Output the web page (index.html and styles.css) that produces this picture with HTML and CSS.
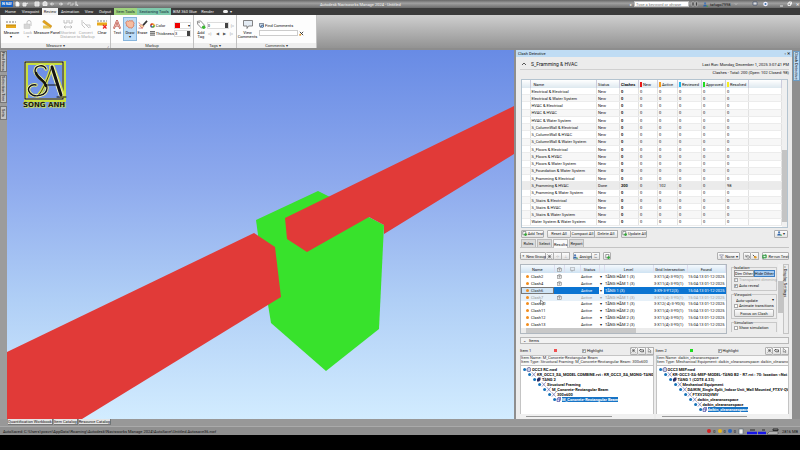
FILE: index.html
```html
<!DOCTYPE html>
<html lang="en">
<head>
<meta charset="utf-8">
<title>Autodesk Navisworks Manage 2024 - Untitled</title>
<link rel="stylesheet" href="styles.css">
</head>
<body>
<svg class="defs" aria-hidden="true">
  <symbol id="ruler" viewBox="0 0 10 9"><path d="M0 2h10" stroke="#555" stroke-width=".8" stroke-dasharray="2 1"/><rect y="4.5" width="10" height="3.5" fill="#e8a91c"/><path d="M1 4.500v1.500M3 4.500v1.500M5 4.500v1.500M7 4.500v1.500M9 4.500v1.500" stroke="#7d5a10" stroke-width=".5"/></symbol>
  <symbol id="lock" viewBox="0 0 10 9"><path d="M4 4V2.500a2 2 0 0 1 4 0V6" fill="none" stroke="#c4c4c4"/><rect x="1" y="4" width="6" height="4.500" fill="#d6d6d6" stroke="#bbb" stroke-width=".4"/></symbol>
  <symbol id="mpanel" viewBox="0 0 10 9"><path d="M2 0L10 6 8.500 8 .5 2z" fill="#e2a21a" stroke="#a87410" stroke-width=".3"/><path d="M1 5.500h4l4 3H1z" fill="#e6c356"/></symbol>
  <symbol id="shortest" viewBox="0 0 10 9"><path d="M1 0v3h3V0M6 0v3h3V0M1 7h8M2.500 5.500L1 7l1.500 1.500M7.500 5.500L9 7 7.500 8.500" fill="none" stroke="#b9b9b9" stroke-width=".9"/></symbol>
  <symbol id="convert" viewBox="0 0 10 9"><path d="M1 0v5l3 3M2 2l6 6M5 5h4v3" fill="none" stroke="#c0c0c0" stroke-width=".9"/></symbol>
  <symbol id="clear" viewBox="0 0 10 9"><path d="M0 1h10" stroke="#666" stroke-width=".8" stroke-dasharray="2 1"/><rect y="2.500" width="10" height="3" fill="#e8a91c"/><path d="M6 5l3.500 3.500M9.500 5L6 8.500" stroke="#e22" stroke-width="1.300"/></symbol>
  <symbol id="text" viewBox="0 0 10 10"><path d="M1.500 9.500L5 .8l3.500 8.700M2.900 6.200h4.200" fill="none" stroke="#b4453b" stroke-width="2"/><path d="M1.500 9.500L5 .8l3.500 8.700M2.900 6.200h4.200" fill="none" stroke="#fbd8cf" stroke-width=".8"/></symbol>
  <symbol id="cloud" viewBox="0 0 10 10"><path d="M1 2q1-2 2.500-.5Q5-.5 6 1.200 8-.3 8.500 2 10.500 3.500 9 5q1.200 2-.8 2.500Q7.500 10 5.500 8.700 3 9.500 2.800 7.200.2 7 1 4.800-.5 3 1 2z" fill="#f6bca0" stroke="#cf6b4f" stroke-width=".8"/></symbol>
  <symbol id="erase" viewBox="0 0 10 10"><path d="M9.500 1L5 6" stroke="#333" stroke-width="1.800"/><path d="M1 6l2-1 3 2-2 2z" fill="#f5d9a0" stroke="#b33" stroke-width=".5"/><path d="M0 3l2 1M0 9h5" stroke="#c44" stroke-width=".7"/></symbol>
  <symbol id="wheel" viewBox="0 0 6 6"><circle cx="3" cy="3" r="2.800" fill="#f39b1c"/><path d="M3 3V.2A2.800 2.800 0 0 0 .2 3z" fill="#d02a2a"/><path d="M3 3H.2A2.800 2.800 0 0 0 3 5.800z" fill="#2a62c8"/><path d="M3 3v2.800A2.800 2.800 0 0 0 5.800 3z" fill="#3aaa44"/><circle cx="3" cy="3" r="1" fill="#fff"/></symbol>
  <symbol id="thick" viewBox="0 0 6 6"><path d="M0 .8h6M0 2.700h6M0 4.900h6" stroke="#444" stroke-width="1.100"/></symbol>
  <symbol id="tag" viewBox="0 0 10 10"><path d="M1 1.500L4.500 1 9 6 5.500 9 1.200 4.500z" fill="#fff" stroke="#666" stroke-width=".8"/><circle cx="2.800" cy="2.800" r=".7" fill="#555"/><circle cx="8" cy="8" r="2" fill="#3cb832"/></symbol>
  <symbol id="bubble" viewBox="0 0 10 9"><path d="M.5.5h9v5.500H5.500L4 8.500V6H.5z" fill="#e4ecf4" stroke="#777" stroke-width=".9"/></symbol>
  <symbol id="find" viewBox="0 0 6 6"><path d="M.5.500h5v3.500H3L2 5.500V4H.5z" fill="#cfdcec" stroke="#456" stroke-width=".8"/><circle cx="4" cy="4" r="1.400" fill="#9cf" stroke="#235" stroke-width=".7"/></symbol>
  <symbol id="bino" viewBox="0 0 6 6"><path d="M1 1l4 4M5 1L1 5" stroke="#333" stroke-width="1.100"/><circle cx="1.500" cy="4.500" r="1.200" fill="#e49a28"/></symbol>
  <symbol id="docadd" viewBox="0 0 6 6"><path d="M1 .5h3.500v4H1z" fill="#fff" stroke="#555" stroke-width=".7"/><circle cx="4.300" cy="4.300" r="1.600" fill="#2ea836"/></symbol>
  <symbol id="cam" viewBox="0 0 6 6"><rect x=".5" y="1.500" width="5" height="3.800" fill="#eee" stroke="#777" stroke-width=".6"/><path d="M2 1.500V.7h2v.8" stroke="#777" stroke-width=".6" fill="none"/><circle cx="3" cy="3.400" r="1" fill="#999"/></symbol>
  <symbol id="person" viewBox="0 0 6 6"><circle cx="2.500" cy="1.500" r="1.300" fill="#4b78b5"/><path d="M.3 5.500q0-2.500 2.200-2.500t2.200 2.500z" fill="#2f66ab"/><circle cx="5" cy="5" r=".8" fill="#3a3"/></symbol>
  <symbol id="cyc" viewBox="0 0 6 6"><path d="M1 4V1.500h3.500M5 2v2.500H1.500" fill="none" stroke="#2a9a3a" stroke-width="1.200"/><path d="M4 0l2 1.500L4 3zM2 3L0 4.500 2 6z" fill="#2a9a3a"/></symbol>
  <symbol id="filter" viewBox="0 0 6 6"><path d="M.5 1h5L3.500 3v2.500L2.500 4.500V3z" fill="#eef" stroke="#667" stroke-width=".6"/></symbol>
  <symbol id="undo" viewBox="0 0 6 6"><path d="M1 1v2.500h2.500M1.200 3.200Q3 .5 5 2.500T3 5.500" fill="none" stroke="#666" stroke-width=".8"/></symbol>
  <symbol id="eyes" viewBox="0 0 6 6"><path d="M1 1l3 3" stroke="#555" stroke-width="1.200"/><circle cx="4" cy="4" r="1.500" fill="#e49a28"/></symbol>
  <symbol id="hand" viewBox="0 0 6 6"><path d="M.5 3L2 1.300v1h3.500v2.200H2.500z" fill="#fff" stroke="#222" stroke-width=".8"/></symbol>
  <symbol id="arrow" viewBox="0 0 6 6"><path d="M1.500.5v4.500l1.200-1 1 1.700.7-.4-.9-1.700h1.500z" fill="#fff" stroke="#333" stroke-width=".5"/></symbol>
  <symbol id="grp" viewBox="0 0 6 6"><path d="M.5.500l5 5M5.500.500l-5 5M1 3h4M3 1v4" stroke="#555" stroke-width=".6"/></symbol>
  <symbol id="node" viewBox="0 0 8 5"><circle cx="1.600" cy="2.500" r="1.500" fill="#1572b8"/><path d="M4 .5l3.500 4M7.500.5L4 4.500" stroke="#3a3a90" stroke-width=".8" stroke-dasharray="1 .4"/></symbol>
  <symbol id="file" viewBox="0 0 8 5"><circle cx="1.600" cy="2.500" r="1.500" fill="#1572b8"/><path d="M4 1.500L6 .3l1.700 1V4L6 4.800 4 4z" fill="#c9d0e8" stroke="#3a3a80" stroke-width=".6"/></symbol>
  <symbol id="level" viewBox="0 0 8 5"><circle cx="1.600" cy="2.500" r="1.500" fill="#1572b8"/><path d="M4 2l1.500-1.500h2V3L6 4.500H4z" fill="#2b2b60"/></symbol>
  <symbol id="geo" viewBox="0 0 8 5"><circle cx="1.600" cy="2.500" r="1.500" fill="#1572b8"/><path d="M4 2h2.500v2.500H4zM4 2l1-1.500h2.500L6.500 2M7.500.5V3l-1 1.500" fill="#dfe0f4" stroke="#3c3c9c" stroke-width=".6"/></symbol>
</svg>

<header class="titlebar">
  <div class="quick">
    <span class="app">N<small>NAV</small></span>
    <svg viewBox="0 0 72 8" class="qicons"><g fill="none" stroke="#eee" stroke-width=".9"><path d="M3 2h2l1 1v3H3z" fill="#fff"/><path d="M10 3h3v3h-3zM13 4l2-1" fill="#ddd"/><path d="M22 2h4v4h-4zM22 4h4" fill="#ccc"/><path d="M30 2.500l2-1 2 1v3H30z" fill="#ddd"/><path d="M38 4h3M39 2.500L37.500 4 39 5.500M46 4h3M48 2.500L49.500 4 48 5.500"/><path d="M55 5V3h3M60 3v2h-3" stroke="#ccc"/><path d="M63 1.500v4l1-1 1 1.500"/></g></svg>
  </div>
  <h1>Autodesk Navisworks Manage 2024 - Untitled</h1>
  <div class="account">
    <span>▸</span><input class="search" type="text" aria-label="Search" placeholder="Type a keyword or phrase">
    <svg viewBox="0 0 10 6" class="i10"><path d="M1 1h2v4H1zM4.500 1h2v4h-2z" fill="#444" stroke="#ccc" stroke-width=".5"/></svg>
    <svg class="i5"><use href="#person"/></svg><span class="user">tafugo7998</span>
    <svg viewBox="0 0 60 8" class="winicons"><path d="M3 3.500l1 1 1-1" stroke="#ddd" stroke-width=".6" fill="none"/><path d="M21 2h4v3h-4z" fill="#ddd" stroke="#346" stroke-width=".6"/><circle cx="33.500" cy="4" r="2.300" fill="#eef"/><circle cx="33.500" cy="4" r="1" fill="#47a"/><path d="M48 6h3M56 3h2.500v2.500H56zM57 3V2h2.500v2.500" stroke="#fff" stroke-width=".8" fill="none"/></svg>
    <button class="close" aria-label="Close">✕</button>
  </div>
</header>

<nav class="menu">
  <a href="#">Home</a><a href="#">Viewpoint</a><a href="#" class="on">Review</a><a href="#">Animation</a><a href="#">View</a><a href="#">Output</a><a href="#" class="item">Item Tools</a><a href="#" class="section">Sectioning Tools</a><a href="#">BIM 360 Glue</a><a href="#">Render</a><a href="#"><i class="pill"></i>▾</a>
</nav>

<section class="ribbon">
  <div class="group g-measure">
    <div class="tools">
      <button class="tool w19"><svg><use href="#ruler"/></svg>Measure<b>▾</b></button>
      <button class="tool w14 off"><svg><use href="#lock"/></svg>Lock<b>▾</b></button>
      <button class="tool w25"><svg><use href="#mpanel"/></svg>Measure Panel</button>
      <button class="tool w17 off"><svg><use href="#shortest"/></svg>Shortest<br>Distance</button>
      <button class="tool w19 off"><svg><use href="#convert"/></svg>Convert<br>to Markup</button>
      <button class="tool w14"><svg><use href="#clear"/></svg>Clear</button>
    </div>
    <h2>Measure ▾<em>⌟</em></h2>
  </div>
  <div class="group g-markup">
    <div class="tools">
      <button class="tool w11"><svg><use href="#text"/></svg>Text</button>
      <button class="tool w16 sel"><svg><use href="#cloud"/></svg>Draw<b>▾</b></button>
      <button class="tool w11"><svg><use href="#erase"/></svg>Erase</button>
      <div class="fields">
        <label for="color"><svg class="i5"><use href="#wheel"/></svg>Color</label><span class="swatch"><select id="color"><option></option></select></span>
        <label for="thick"><svg class="i5"><use href="#thick"/></svg>Thickness</label><span class="spin"><input id="thick" type="text" value="3"></span>
      </div>
    </div>
    <h2>Markup</h2>
  </div>
  <div class="group g-tags">
    <div class="tools">
      <button class="tool w11"><svg><use href="#tag"/></svg>Add<br>Tag</button>
      <div class="tagbox"><div class="row"><span class="spin"><input type="text" aria-label="Tag" value="0"></span><button>▷</button></div>
      <div class="row nav"><button>◁</button><button>◀</button><button>▶</button><button>▷</button></div></div>
    </div>
    <h2>Tags ▾</h2>
  </div>
  <div class="group g-comments">
    <div class="tools">
      <button class="tool w19"><svg><use href="#bubble"/></svg>View<br>Comments</button>
      <div class="findbox"><label for="fc"><svg class="i5"><use href="#find"/></svg>Find Comments</label><div class="row"><input id="fc" type="text"><svg class="i5"><use href="#bino"/></svg></div></div>
    </div>
    <h2>Comments ▾</h2>
  </div>
</section>

<main class="work">
  <aside class="rail left"><button class="t1">Find Items</button><button class="t2">Selection Tree</button><button class="t3">Sets</button></aside>

  <section class="scene">
    <svg class="model" viewBox="7 50 507 369" preserveAspectRatio="none">
      <polygon fill="#38e22c" points="256,220 318,191 332,198 384,225 379,329 326,371 271,323 264,280"/>
      <polygon fill="#e13a38" points="7,352 254,233 275,247 281,297 82,419 7,419"/>
      <polygon fill="#e13a38" points="285,218 514,106 514,154 384,234 384,225 369,217 307,252 287,239"/>
    </svg>
    <figure class="logo">
      <svg viewBox="0 0 46 42" role="img" aria-label="SA">
        <rect x="3" y="3" width="38" height="37" fill="none" stroke="#c8df3c" stroke-width="4"/>
        <rect x="2" y="2" width="38" height="37" fill="none" stroke="#eef3d0" stroke-width="2"/>
        <rect x="2" y="2" width="38" height="37" fill="none" stroke="#15150f" stroke-width="1.200"/>
        <g fill="none" stroke-linecap="round"><g stroke="#d4e04c" stroke-width="3.500"><path d="M23 9C21 4 12 5 12 11S24 20 24 28 11 38 7 33 8 24 13 25"/><path d="M15 36Q22 28 29 6"/><path d="M29 7l10 28" stroke-width="6"/></g><g stroke="#f4f6e0" stroke-width="2.600"><path d="M23 9C21 4 12 5 12 11S24 20 24 28 11 38 7 33 8 24 13 25"/><path d="M29 7l9 28" stroke-width="4.500"/></g>
        <g stroke="#15150f"><path d="M23 9C21 4 12 5 12 11S24 20 24 28 11 38 7 33 8 24 13 25" stroke-width="1.400"/><path d="M13 13C15 19 22 21 23 26" stroke-width="2.400"/><path d="M15 36Q22 28 29 6" stroke-width=".8"/><path d="M29 7l9 28" stroke-width="3"/><path d="M34 37h9M22 25h12" stroke-width="1"/></g></g>
      </svg>
      <figcaption>SONG ANH</figcaption>
    </figure>
  </section>

  <section class="panel">
    <header class="phead"><span>Clash Detective</span><span>▫ <b>✕</b></span></header>
    <div class="pbody">
      <div class="testinfo">
        <h3><svg viewBox="0 0 6 6"><path d="M1 4l2-2 2 2" fill="none" stroke="#333" stroke-width=".8"/></svg>S_Framming &amp; HVAC</h3><p>Last Run: Monday, December 1, 2025 3:07:41 PM</p>
      </div>
      <p class="totals">Clashes - Total: 200 (Open: 102 Closed: 98)</p>

      <div class="tests">
        <table>
          <colgroup><col class="c8"><col><col class="c23"><col class="c19"><col class="c19"><col class="c20"><col class="c24"><col class="c24"><col class="c23"><col class="c33"></colgroup>
          <thead><tr><th></th><th>Name</th><th>Status</th><th>Clashes</th><th><i class="red"></i>New</th><th><i class="orange"></i>Active</th><th><i class="cyan"></i>Reviewed</th><th><i class="green"></i>Approved</th><th><i class="yellow"></i>Resolved</th><th></th></tr></thead>
          <tbody>
          <tr><td></td><td>Electrical &amp; Electrical</td><td>New</td><td>0</td><td>0</td><td>0</td><td>0</td><td>0</td><td>0</td><td></td></tr>
          <tr><td></td><td>Electrical &amp; Water System</td><td>New</td><td>0</td><td>0</td><td>0</td><td>0</td><td>0</td><td>0</td><td></td></tr>
          <tr><td></td><td>HVAC &amp; Electrical</td><td>New</td><td>0</td><td>0</td><td>0</td><td>0</td><td>0</td><td>0</td><td></td></tr>
          <tr><td></td><td>HVAC &amp; HVAC</td><td>New</td><td>0</td><td>0</td><td>0</td><td>0</td><td>0</td><td>0</td><td></td></tr>
          <tr><td></td><td>HVAC &amp; Water System</td><td>New</td><td>0</td><td>0</td><td>0</td><td>0</td><td>0</td><td>0</td><td></td></tr>
          <tr><td></td><td>S_ColumnWall &amp; Electrical</td><td>New</td><td>0</td><td>0</td><td>0</td><td>0</td><td>0</td><td>0</td><td></td></tr>
          <tr><td></td><td>S_ColumnWall &amp; HVAC</td><td>New</td><td>0</td><td>0</td><td>0</td><td>0</td><td>0</td><td>0</td><td></td></tr>
          <tr><td></td><td>S_ColumnWall &amp; Water System</td><td>New</td><td>0</td><td>0</td><td>0</td><td>0</td><td>0</td><td>0</td><td></td></tr>
          <tr><td></td><td>S_Floors &amp; Electrical</td><td>New</td><td>0</td><td>0</td><td>0</td><td>0</td><td>0</td><td>0</td><td></td></tr>
          <tr><td></td><td>S_Floors &amp; HVAC</td><td>New</td><td>0</td><td>0</td><td>0</td><td>0</td><td>0</td><td>0</td><td></td></tr>
          <tr><td></td><td>S_Floors &amp; Water System</td><td>New</td><td>0</td><td>0</td><td>0</td><td>0</td><td>0</td><td>0</td><td></td></tr>
          <tr><td></td><td>S_Foundation &amp; Water System</td><td>New</td><td>0</td><td>0</td><td>0</td><td>0</td><td>0</td><td>0</td><td></td></tr>
          <tr><td></td><td>S_Framming &amp; Electrical</td><td>New</td><td>0</td><td>0</td><td>0</td><td>0</td><td>0</td><td>0</td><td></td></tr>
          <tr class="cur"><td></td><td>S_Framming &amp; HVAC</td><td>Done</td><td>200</td><td>0</td><td>102</td><td>0</td><td>0</td><td>98</td><td></td></tr>
          <tr><td></td><td>S_Framming &amp; Water System</td><td>New</td><td>0</td><td>0</td><td>0</td><td>0</td><td>0</td><td>0</td><td></td></tr>
          <tr><td></td><td>S_Stairs &amp; Electrical</td><td>New</td><td>0</td><td>0</td><td>0</td><td>0</td><td>0</td><td>0</td><td></td></tr>
          <tr><td></td><td>S_Stairs &amp; HVAC</td><td>New</td><td>0</td><td>0</td><td>0</td><td>0</td><td>0</td><td>0</td><td></td></tr>
          <tr><td></td><td>S_Stairs &amp; Water System</td><td>New</td><td>0</td><td>0</td><td>0</td><td>0</td><td>0</td><td>0</td><td></td></tr>
          <tr><td></td><td>Water System &amp; Water System</td><td>New</td><td>0</td><td>0</td><td>0</td><td>0</td><td>0</td><td>0</td><td></td></tr>
          </tbody>
        </table>
        <div class="vscroll"><i></i></div>
      </div>

      <div class="bar">
        <button class="btn b23"><svg><use href="#docadd"/></svg>Add Test</button>
        <span class="joined"><button class="btn b24">Reset All</button><button class="btn b24">Compact All</button><button class="btn b23">Delete All</button></span>
        <button class="btn b26"><svg><use href="#docadd"/></svg>Update All</button>
        <button class="btn b14 end" aria-label="Import"><svg><use href="#person"/></svg>▾</button>
      </div>

      <div class="tabs"><button>Rules</button><button>Select</button><button class="on">Results</button><button>Report</button></div>

      <div class="bar results-bar">
        <span class="joined"><button class="btn b26">⁝<sup>✦</sup>New Group</button><button class="btn b8" aria-label="Group"><svg><use href="#grp"/></svg></button><button class="btn b8 off">⊹</button><button class="btn b8 off">⊥</button></span>
        <span class="joined"><button class="btn b19"><svg><use href="#person"/></svg>Assign</button><button class="btn b8 off">⊏</button></span>
        <button class="btn b8" aria-label="Comment"><svg><use href="#docadd"/></svg></button>
        <button class="btn b23 end"><svg><use href="#filter"/></svg>None ▾</button>
        <span class="joined"><button class="btn b8" aria-label="Undo"><svg><use href="#undo"/></svg></button><button class="btn b8" aria-label="Compact"><svg><use href="#eyes"/></svg></button></span>
        <button class="btn b27"><svg><use href="#cyc"/></svg>Re-run Test</button>
      </div>

      <div class="split">
        <div class="clashes">
          <table>
            <colgroup><col class="c33"><col class="c10"><col class="c16"><col class="c19"><col class="c5"><col class="c48"><col class="c35"><col></colgroup>
            <thead><tr><th>Name</th><th><svg class="i5"><use href="#cam"/></svg></th><th><svg class="i5" viewBox="0 0 10 9"><use href="#bubble"/></svg></th><th>Status</th><th></th><th>Level</th><th>Grid Intersection</th><th>Found</th></tr></thead>
            <tbody>
            <tr><td><i></i>Clash2</td><td><svg class="i5"><use href="#cam"/></svg></td><td></td><td>Active</td><td>▾</td><td>TẦNG HẦM 1 (3)</td><td>3-X11(4)-3-Y0(1)</td><td>15:04:13 01-12-2025</td></tr>
            <tr><td><i></i>Clash4</td><td><svg class="i5"><use href="#cam"/></svg></td><td></td><td>Active</td><td>▾</td><td>TẦNG HẦM 1 (3)</td><td>3-X11(4)-3-Y0(1)</td><td>15:04:13 01-12-2025</td></tr>
            <tr class="sel"><td><i></i>Clash6</td><td></td><td></td><td>Active</td><td>▾</td><td>TẦNG 1 (3)</td><td>3-X9-3-Y12(3)</td><td>15:04:13 01-12-2025</td></tr>
            <tr class="dim"><td><i></i>Clash7</td><td><svg class="i5"><use href="#cam"/></svg></td><td></td><td>Active</td><td>▾</td><td>TẦNG HẦM 1 (3)</td><td>3-X11(4)-3-Y0(1)</td><td>15:04:13 01-12-2025</td></tr>
            <tr><td><i></i>Clash10<svg class="cursor"><use href="#arrow"/></svg></td><td></td><td></td><td>Active</td><td>▾</td><td>TẦNG HẦM 1 (3)</td><td>3-X12(-4)-3-Y0(5)</td><td>15:04:13 01-12-2025</td></tr>
            <tr><td><i></i>Clash11</td><td></td><td></td><td>Active</td><td>▾</td><td>TẦNG HẦM 2 (3)</td><td>3-X11(4)-3-Y0(1)</td><td>15:04:13 01-12-2025</td></tr>
            <tr><td><i></i>Clash12</td><td></td><td></td><td>Active</td><td>▾</td><td>TẦNG HẦM 2 (3)</td><td>3-X11(4)-3-Y0(1)</td><td>15:04:13 01-12-2025</td></tr>
            <tr><td><i></i>Clash13</td><td></td><td></td><td>Active</td><td>▾</td><td>TẦNG HẦM 2 (3)</td><td>3-X11(4)-3-Y0(1)</td><td>15:04:13 01-12-2025</td></tr>
            </tbody>
          </table>
          <div class="hscroll"><i></i></div>
        </div>
        <div class="settings">
          <fieldset><legend>Isolation</legend><div class="toggle"><button>Dim Other</button><button class="on">Hide Other</button></div>
            <label class="off"><input type="checkbox" checked disabled>Transparent dimming</label><label><input type="checkbox" checked>Auto reveal</label></fieldset>
          <fieldset><legend>Viewpoint</legend><div class="pick"><select aria-label="Viewpoint"><option>Auto-update</option></select></div><label><input type="checkbox">Animate transitions</label><button class="btn focus">Focus on Clash</button></fieldset>
          <fieldset class="cut"><legend>Simulation</legend><label><input type="checkbox">Show simulation</label></fieldset>
        </div>
        <div class="vscroll mid"><i></i></div>
        <button class="dtab">» Display Settings</button>
      </div>

      <button class="items">⌄ &nbsp; Items</button>

      <div class="pair">
        <div class="item">
          <div class="ihead"><span>Item 1</span><i class="red"></i><label><input type="checkbox" checked>Highlight</label><span class="joined"><button class="btn b8"><svg><use href="#grp"/></svg></button><button class="btn b8"><svg><use href="#hand"/></svg></button><button class="btn b8"><svg><use href="#arrow"/></svg></button></span></div>
          <div class="desc">Item Name: M_Concrete-Rectangular Beam<br>Item Type: Structural Framing: M_Concrete-Rectangular Beam: 300x600</div>
          <ul class="tree">
            <li class="d0"><svg><use href="#file"/></svg>OCC3 RC.nwd</li>
            <li class="d1"><svg><use href="#node"/></svg>KR_OCC3_SA_MODEL COMBINE.rvt : KR_OCC3_SA_MONG-TANG 3.rv</li>
            <li class="d2"><svg><use href="#level"/></svg>TẦNG 2</li>
            <li class="d3"><svg><use href="#node"/></svg>Structural Framing</li>
            <li class="d4"><svg><use href="#node"/></svg>M_Concrete-Rectangular Beam</li>
            <li class="d5"><svg><use href="#node"/></svg>300x600</li>
            <li class="d6"><svg><use href="#geo"/></svg><mark>M_Concrete-Rectangular Beam</mark></li>
          </ul>
          <div class="thumb"></div>
        </div>
        <div class="item">
          <div class="ihead"><span>Item 2</span><i class="green"></i><label><input type="checkbox" checked>Highlight</label><span class="joined"><button class="btn b8"><svg><use href="#grp"/></svg></button><button class="btn b8"><svg><use href="#hand"/></svg></button><button class="btn b8"><svg><use href="#arrow"/></svg></button></span></div>
          <div class="desc">Item Name: daikin_clearancespace<br>Item Type: Mechanical Equipment: daikin_clearancespace: daikin_clearancespace</div>
          <ul class="tree">
            <li class="d0"><svg><use href="#file"/></svg>OCC3 MEP.nwd</li>
            <li class="d1"><svg><use href="#node"/></svg>KR-OCC3-SA-MEP-MODEL-TẦNG B2 - R7.rvt : 70: location &lt;Not Shar</li>
            <li class="d2"><svg><use href="#level"/></svg>TẦNG 1 (COTE 4.33)</li>
            <li class="d3"><svg><use href="#node"/></svg>Mechanical Equipment</li>
            <li class="d4"><svg><use href="#node"/></svg>DAIKIN_Single Split_Indoor Unit_Wall Mounted_FTXV-QVMV</li>
            <li class="d5"><svg><use href="#node"/></svg>FTXV25QVMV</li>
            <li class="d6"><svg><use href="#node"/></svg>daikin_clearancespace</li>
            <li class="d7"><svg><use href="#node"/></svg>daikin_clearancespace</li>
            <li class="d8"><svg><use href="#geo"/></svg><mark>daikin_clearancespace</mark></li>
          </ul>
          <div class="thumb"></div>
        </div>
      </div>
    </div>
  </section>
  <aside class="rail right"><button>Clash Detective</button></aside>
</main>

<div class="docks"><button>Quantification Workbook</button><button>Item Catalog</button><button>Resource Catalog</button></div>
<footer class="status"><span>AutoSaved: C:\Users\pcsvn\AppData\Roaming\Autodesk\Navisworks Manage 2024\AutoSave\Untitled.Autosave36.nwf</span>
  <div class="counts"><i class="err"></i>0<i class="warn"></i>0<i class="info"></i>0
  <svg viewBox="0 0 42 7" class="meters"><rect x="1" y="1" width="4" height="5" fill="#eee" stroke="#567" stroke-width=".6"/><path d="M12 2h5M24 2h3M35 1h5v1.500h-5z" stroke="#222" stroke-width=".9" fill="none"/><path d="M9 5h10M20 5h8" stroke="#1515e8" stroke-width="2.500"/><path d="M29 6l2-2h9v2z" fill="#ddd" stroke="#333" stroke-width=".5"/></svg>2816 MB</div>
</footer>
</body>
</html>
```
FILE: styles.css
```css
* { box-sizing: border-box; }
body {
  margin: 0; min-height: 100vh; padding-bottom: 15px;
  display: flex; flex-direction: column;
  background: #000; color: #111;
  font: 4px/5px Roboto, "Liberation Sans", sans-serif;
}
button, input, select { font: inherit; color: inherit; margin: 0; padding: 0; border: 0; background: none; border-radius: 0; }
select { appearance: none; }
h1, h2, h3, p, ul, figure { margin: 0; padding: 0; font: inherit; }
a { color: inherit; text-decoration: none; }
em { font-style: normal; }
svg { display: block; flex: none; overflow: visible; }
.defs { width: 0; height: 0; position: absolute; }
.i5 { width: 5px; height: 5px; }
.i10 { width: 10px; height: 6px; }
.row { display: flex; align-items: center; }

.titlebar { height: 8px; display: grid; grid-template-columns: 40% auto 1fr; align-items: center; background: linear-gradient(#686868, #a0a0a0 40%, #6b6b6b); color: #f4f4f4; }
.quick { display: flex; align-items: center; }
.app { width: 12px; height: 6px; margin-left: 1px; padding-left: 1px; background: #1763c6; color: #fff; font-weight: bold; line-height: 6px; }
.app small { font-size: 3px; margin-left: 1px; }
.qicons { width: 72px; height: 8px; }
.account { display: flex; align-items: center; justify-content: flex-end; gap: 2px; }
.search { width: 55px; height: 6px; padding-left: 1px; background: #fff; color: #333; border: 1px solid #bbb; }
.user { color: #111; width: 20px; }
.winicons { width: 60px; height: 8px; }
.close { width: 6px; font-weight: bold; }

.menu { height: 7px; display: flex; background: #3b3b3b; color: #f0f0f0; line-height: 7px; padding-left: 2px; }
.menu a { width: 17px; text-align: center; white-space: nowrap; }
.menu a:nth-child(2) { width: 23px; }
.menu a:nth-child(4) { width: 24px; }
.menu a:nth-child(5) { width: 14px; }
.menu a:nth-child(6) { width: 18px; }
.menu .on { background: #f4f4f4; color: #222; width: 16px; }
.menu .item { background: #9ed27c; color: #123; width: 23px; }
.menu .section { background: #7fc9ac; color: #123; width: 34px; }
.menu a:nth-child(9) { width: 28px; }
.pill { display: inline-block; width: 5px; height: 3px; margin: 0 2px 0 6px; border-radius: 2px; background: #eee; }

.ribbon { height: 35px; display: flex; padding-left: 1px; background: linear-gradient(#cfcfcf, #939393); border-bottom: 2px solid #8d8d8d; }
.group { display: flex; flex-direction: column; background: #fdfdfd; border-right: 1px solid #c2c2c2; }
.group h2 { height: 5px; background: #eee; color: #333; text-align: center; position: relative; }
.group h2 em { position: absolute; right: 1px; }
.g-measure { width: 110px; } .g-markup { width: 83px; } .g-tags { width: 43px; } .g-comments { width: 80px; }
.tools { flex: 1; display: flex; padding: 2px 1px 0; }
.tool { display: flex; flex-direction: column; align-items: center; white-space: nowrap; padding-top: 3px; text-align: center; line-height: 4px; }
.tool svg { width: 10px; height: 9px; margin-bottom: 2px; }
.tool b { font-weight: normal; }
.w11 { width: 12px; } .w14 { width: 14px; } .w16 { width: 16px; } .w17 { width: 17px; } .w19 { width: 19px; } .w25 { width: 25px; }
.off { color: #aaa; }
.sel.tool { background: #bcdcf6; border: 1px solid #86b4dc; padding-top: 2px; height: 24px; }
.fields { flex: 1; display: grid; grid-template-columns: 1fr 17px; grid-auto-rows: 7px; row-gap: 1px; padding: 5px 1px 0 2px; align-items: center; }
.fields label, .findbox label { display: flex; align-items: center; gap: 1px; white-space: nowrap; }
.swatch, .spin { display: flex; height: 7px; border: 1px solid #ddd; background: #fff; }
.swatch::before { content: ""; width: 5px; height: 5px; background: #e00; }
.swatch::after, .pick::after { content: "▾"; }
.swatch select { flex: 1; min-width: 0; }
.spin { flex: 1; }
.spin input { flex: 1; min-width: 0; width: 5px; }
.spin::after { content: ""; width: 3px; background: #444; }
.tagbox { width: 29px; padding-top: 5px; }
.tagbox button { width: 6px; color: #555; text-align: center; }
.nav { justify-content: space-between; margin-top: 2px; }
.findbox { flex: 1; min-width: 0; padding: 6px 11px 0 2px; }
.findbox .row { gap: 1px; margin-top: 2px; }
.findbox input { flex: 1; min-width: 0; height: 6px; border: 1px solid #ccc; background: #fff; }

.work { flex: 1; display: flex; min-height: 369px; background: #a0a0a0; }
.rail { width: 7px; flex: none; display: flex; flex-direction: column; gap: 3px; padding-top: 1px; background: #9c9c9c; }
.rail button { writing-mode: vertical-rl; text-align: center; background: #c3c3c3; border: 1px solid #777; width: 7px; line-height: 5px; white-space: nowrap; }
.t1 { height: 21px; } .t2 { height: 28px; } .t3 { height: 14px; }
.rail.right { width: 8px; padding-left: 1px; background: #8f8f8f; }
.rail.right button { background: #bcd9f1; height: 30px; border-color: #6c9cc4; }

.scene { flex: 1; min-width: 0; position: relative; background: linear-gradient(#688be5, #8da9ed 35%, #b0cff6 68%, #d2ecff); }
.model { position: absolute; width: 100%; height: 100%; }
.logo { position: absolute; left: 16px; top: 10px; width: 46px; }
.logo svg { width: 46px; height: 42px; }
.logo figcaption { font: bold 7px/6px "DejaVu Sans", sans-serif; color: #1a1a10; white-space: nowrap; text-shadow: 0 0 1px #e8f060, 1px 1px 1px #d8e840; }

.panel { width: 278px; flex: none; border: solid #8e8e8e; border-width: 0 0 0 2px; background: #ececec; display: flex; flex-direction: column; }
.phead { height: 7px; display: flex; justify-content: space-between; align-items: center; padding: 0 2px; background: #bfdcf4; }
.pbody { flex: 1; padding: 1px 3px 0 4px; display: flex; flex-direction: column; }
.testinfo { height: 12px; display: flex; justify-content: space-between; align-items: center; border-bottom: 1px solid #d0d0d0; padding-left: 1px; padding-top: 1px; }
.testinfo h3 { display: flex; align-items: center; gap: 4px; font-size: 5px; }
.testinfo svg { width: 6px; height: 6px; }
.totals { text-align: right; height: 9px; }

.tests { display: flex; margin: 0 1px; height: 149px; border: 1px solid #b4c4d0; background: #fff; overflow: hidden; }
table { border-collapse: collapse; table-layout: fixed; width: 100%; }
th, td { padding: 0 1px; text-align: left; font-weight: normal; white-space: nowrap; overflow: hidden; line-height: 5px; height: 5px; }
.tests table { height: 146px; flex: 1; }
.tests th { height: 8px; background: linear-gradient(#fff, #dde8ef); border-right: 1px solid #ccd; }
.tests td { border-right: 1px solid #e2e2e2; border-bottom: 1px solid #ececec; }
.tests td:nth-child(4), .tests th:nth-child(4) { font-weight: bold; }
.tests th:nth-child(2) { padding-left: 3px; }
.tests th i { display: inline-block; width: 2px; height: 5px; margin-right: 1px; vertical-align: top; }
.tests tbody tr:nth-child(even) { background: #f7f7f7; }
.tests tbody tr.cur { background: #ebebeb; }
.red { background: #e81818; } .orange { background: #f59a18; } .cyan { background: #18b4ee; } .green { background: #20dc20; } .yellow { background: #f4ec20; }
.c5 { width: 5px; } .c8 { width: 8px; } .c10 { width: 10px; } .c16 { width: 16px; } .c19 { width: 19px; } .c20 { width: 20px; } .c23 { width: 23px; } .c24 { width: 24px; } .c33 { width: 33px; } .c35 { width: 34px; } .c48 { width: 49px; }
.vscroll { width: 5px; flex: none; background: #f0f0f0; display: flex; flex-direction: column; justify-content: flex-end; padding-bottom: 5px; }
.vscroll i { height: 72px; background: #c4c4c4; }

.bar { display: flex; align-items: center; gap: 3px; height: 11px; padding: 0 1px; }
.btn { height: 8px; display: flex; align-items: center; justify-content: center; gap: 1px; border: 1px solid #b0b0b0; border-radius: 1px; background: linear-gradient(#fdfdfd, #e2e2e2); white-space: nowrap; color: #222; }
.btn.off { color: #aaa; }
.btn svg { width: 5px; height: 5px; }
.joined { display: flex; }
.joined .btn + .btn { border-left: 0; }
.b8 { width: 8px; } .b14 { width: 14px; } .b19 { width: 19px; } .b23 { width: 23px; } .b24 { width: 24px; } .b26 { width: 26px; } .b27 { width: 27px; }
.end { margin-left: auto; }
.tabs { display: flex; height: 9px; gap: 1px; border-bottom: 1px solid #c4c4c4; padding-left: 1px; }
.tabs button { width: 15px; background: #dcdcdc; border: 1px solid #bcbcbc; border-bottom: 0; }
.tabs .on { background: #fafafa; height: 9px; }
.results-bar { height: 16px; padding: 0; }

.split { display: flex; height: 70px; }
.clashes { width: 207px; flex: none; background: #fff; border: 1px solid #b0b8c0; overflow: hidden; display: flex; flex-direction: column; }
.clashes table { height: 63px; }
.clashes th { background: linear-gradient(#f4f9fd, #cfe2f2); border-right: 1px solid #dde; text-align: center; height: 8px; }
.clashes th svg, .clashes td svg { margin: 0 auto; }
.clashes td i { display: inline-block; width: 3px; height: 3px; border-radius: 2px; background: #f28c1c; margin: 1px 2px 1px 4px; vertical-align: top; }
.clashes .sel { background: #0a74d2; color: #fff; }
.clashes .sel td:first-child { background: #cfe4f6; color: #333; outline: 1px solid #777; outline-offset: -1px; }
.clashes .sel td:nth-child(5) { background: #fff; color: #333; }
.clashes .dim { background: #e6f0f8; color: #999; }
.clashes td .cursor { position: absolute; width: 6px; height: 7px; margin: -7px 0 0 17px; }
.hscroll { height: 5px; background: #ececec; padding: 0 5px; }
.hscroll i { display: block; width: 110px; height: 5px; background: #c8c8c8; }
.settings { flex: 1; min-width: 0; padding: 1px 1px 0 4px; overflow: hidden; }
fieldset { border: 1px solid #c8c8c8; margin: 0 0 1px; padding: 0 2px 1px; min-width: 0; }
legend { padding: 0; margin: 0; line-height: 5px; }
fieldset label, .ihead label { display: flex; align-items: center; gap: 1px; line-height: 6px; white-space: nowrap; }
input[type="checkbox"] { appearance: none; width: 4px; height: 4px; outline: 1px solid #aaa; outline-offset: -1px; background: #fff; flex: none; line-height: 4px; }
input[type="checkbox"]:checked::before { content: "✓"; display: block; font-weight: bold; }
.toggle { display: flex; }
.toggle button { flex: 1 0 auto; height: 7px; border: 1px solid #999; background: #f2f2f2; white-space: nowrap; }
.toggle .on { background: #a9cdf2; border-color: #3c7fc4; }
.pick { display: flex; }
.pick select { flex: 1; height: 6px; padding-left: 2px; }
.focus { width: 100%; }
.cut { border-bottom: 0; }
.vscroll.mid { width: 5px; justify-content: center; }
.vscroll.mid i { height: 32px; }
.dtab { writing-mode: vertical-rl; width: 6px; line-height: 5px; text-align: left; padding-top: 1px; border: 1px solid #c4c4c4; white-space: nowrap; }

.items { display: block; width: 100%; height: 7px; margin: 3px 0 2px; padding-left: 2px; text-align: left; border: 1px solid #b8b8b8; background: #f2f2f2; line-height: 5px; }
.pair { flex: 1; display: flex; gap: 2px; }
.pair .item { flex: 1; min-width: 0; display: flex; flex-direction: column; }
.ihead { height: 9px; display: grid; grid-template-columns: 34px 28px 1fr auto; align-items: center; }
.ihead i { width: 3px; height: 3px; }
.ihead .red { background: #f05050; }
.desc { height: 11px; background: #f8f8f8; border: 1px solid #c4c4c4; line-height: 4px; white-space: nowrap; overflow: hidden; color: #333; }
.tree { flex: 1; list-style: none; background: #fff; border: solid #c4c4c4; border-width: 0 1px; padding: 1px 0 0 2px; overflow: hidden; font-weight: bold; }
.tree li { display: flex; align-items: center; height: 5px; white-space: nowrap; }
.tree svg { width: 8px; height: 5px; margin-right: 1px; }
.d1 { margin-left: 5px; } .d2 { margin-left: 10px; } .d3 { margin-left: 15px; } .d4 { margin-left: 20px; } .d5 { margin-left: 25px; } .d6 { margin-left: 30px; } .d7 { margin-left: 35px; } .d8 { margin-left: 40px; }
mark { background: #1674c6; color: #fff; }
.thumb { height: 5px; background: #f0f0f0; padding: 2px 42px 0 6px; }
.thumb::before { content: ""; display: block; height: 1px; background: #999; }

.docks { height: 7px; display: flex; gap: 1px; padding-left: 8px; background: #989898; }
.docks button { height: 6px; background: #e4e4e4; border: solid #777; border-width: 0 1px 1px 0; white-space: nowrap; }
.status { height: 9px; display: flex; justify-content: space-between; align-items: center; padding: 0 2px 0 3px; background: #8f8f8f; border-top: 1px solid #aaa; color: #111; }
.counts { display: flex; align-items: center; gap: 2px; }
.counts i { width: 4px; height: 4px; border-radius: 2px; }
.err { background: #d42222; } .warn { background: #e8b81c; } .info { background: #2866c8; }
.meters { width: 42px; height: 7px; }
```
